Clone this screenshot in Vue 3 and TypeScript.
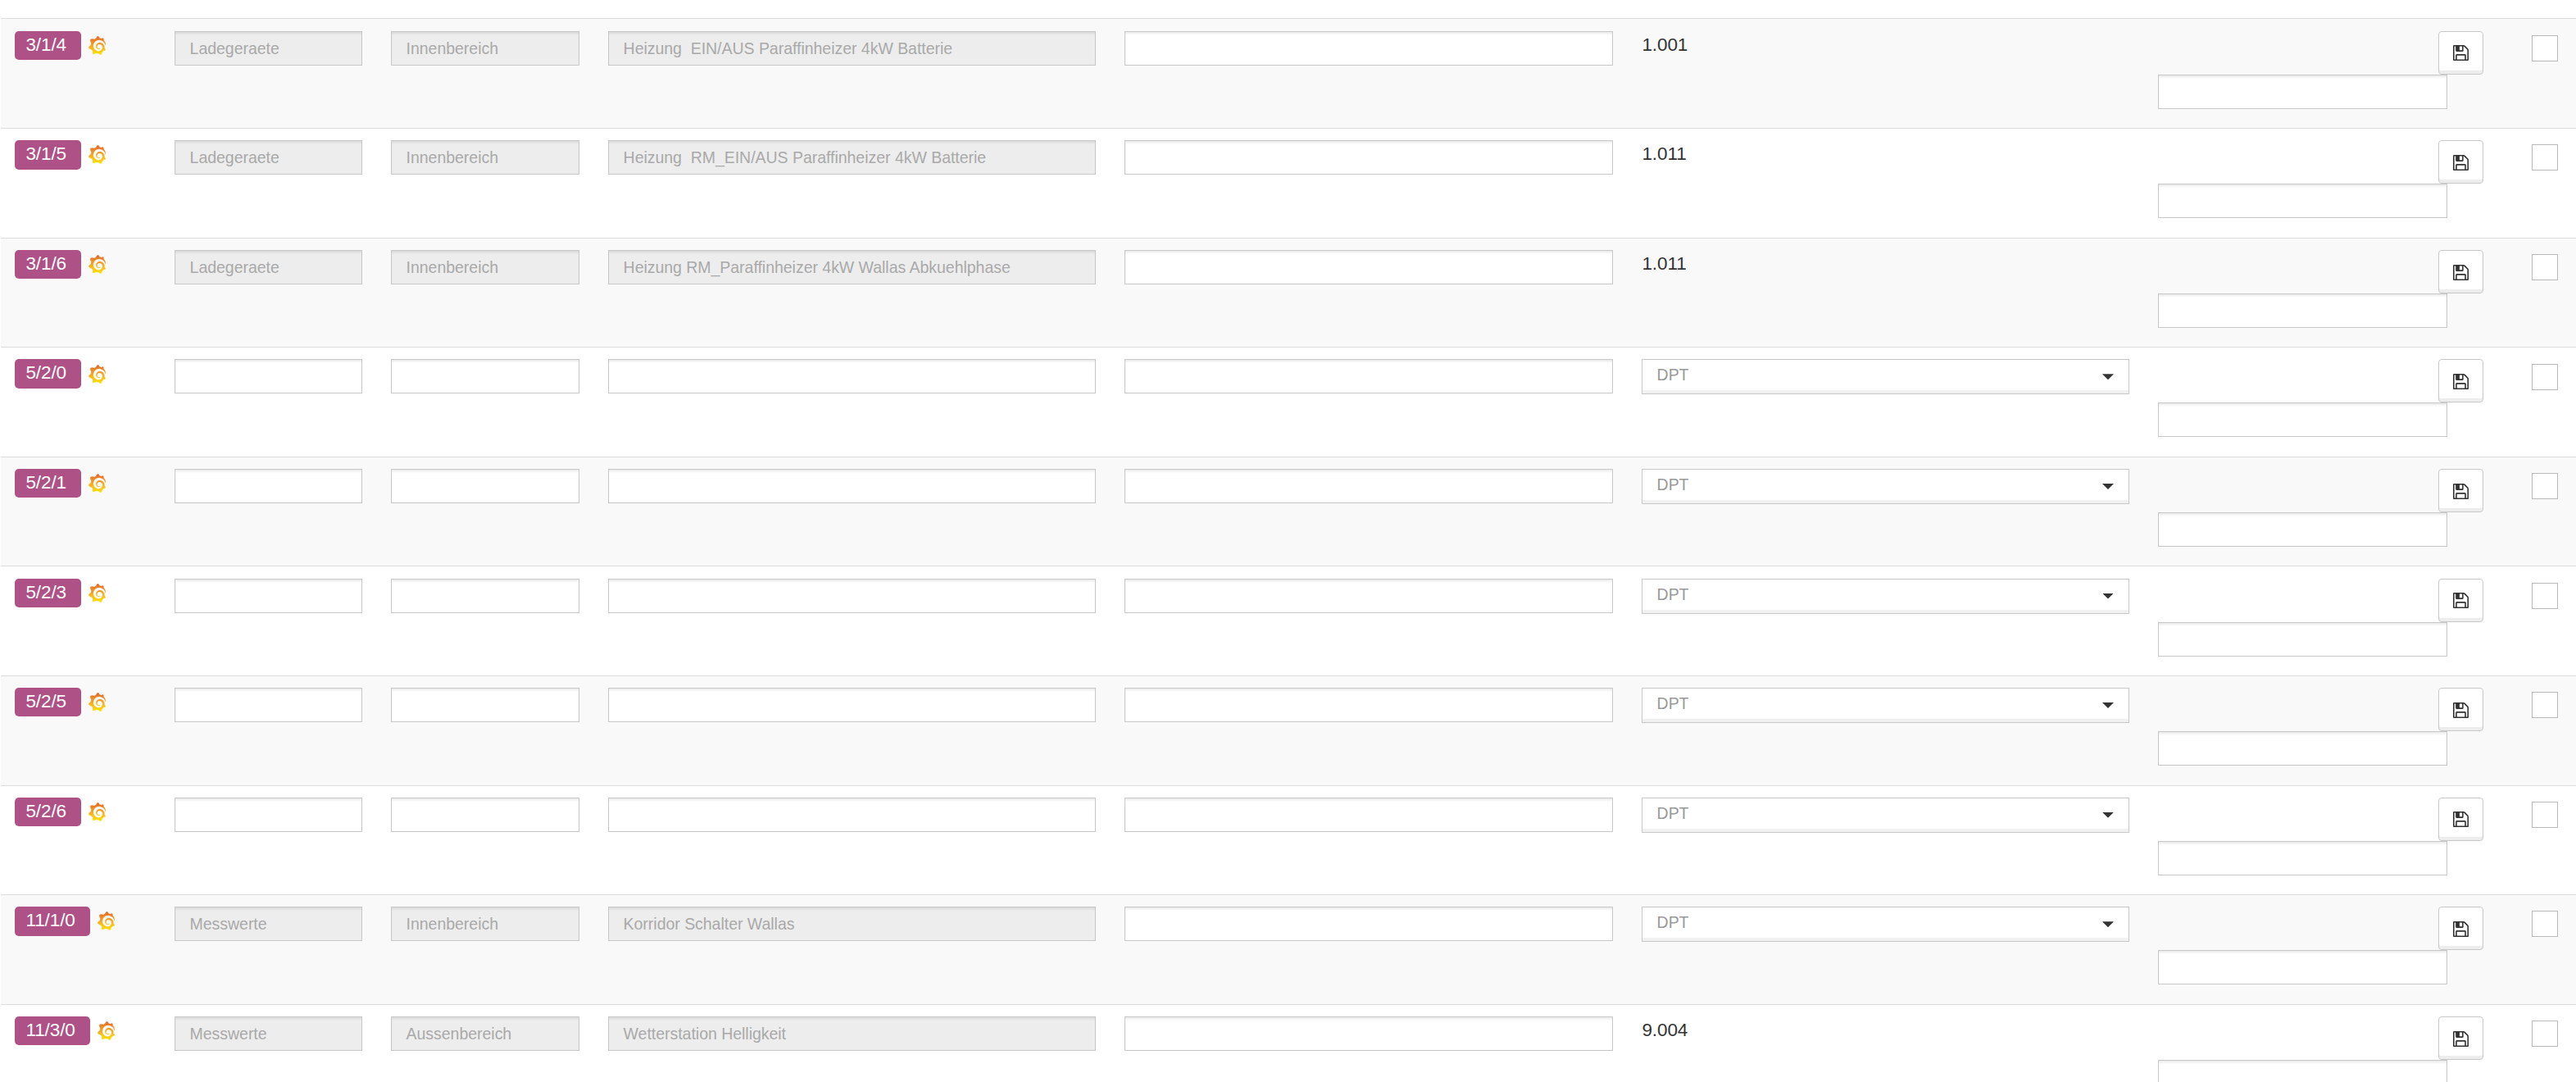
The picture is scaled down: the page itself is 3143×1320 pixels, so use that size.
<script setup lang="ts">
interface Row {
  address: string
  main: string
  middle: string
  name: string
  dpt: string
}

const heating = (address: string, name: string, dpt: string): Row => ({
  address,
  main: 'Ladegeraete',
  middle: 'Innenbereich',
  name,
  dpt,
})
const blank = (address: string): Row => ({ address, main: '', middle: '', name: '', dpt: '' })

const rows: Row[] = [
  heating('3/1/4', 'Heizung  EIN/AUS Paraffinheizer 4kW Batterie', '1.001'),
  heating('3/1/5', 'Heizung  RM_EIN/AUS Paraffinheizer 4kW Batterie', '1.011'),
  heating('3/1/6', 'Heizung RM_Paraffinheizer 4kW Wallas Abkuehlphase', '1.011'),
  blank('5/2/0'),
  blank('5/2/1'),
  blank('5/2/3'),
  blank('5/2/5'),
  blank('5/2/6'),
  { address: '11/1/0', main: 'Messwerte', middle: 'Innenbereich', name: 'Korridor Schalter Wallas', dpt: '' },
  { address: '11/3/0', main: 'Messwerte', middle: 'Aussenbereich', name: 'Wetterstation Helligkeit', dpt: '9.004' },
]
</script>

<template>
  <main class="page">
    <svg class="defs" width="0" height="0" aria-hidden="true">
      <defs>
        <linearGradient id="sun" x1="0" y1="1" x2="0" y2="0">
          <stop offset="0" stop-color="#fbe400" />
          <stop offset="0.4" stop-color="#f8b41e" />
          <stop offset="1" stop-color="#e5642c" />
        </linearGradient>
        <symbol id="grafana" viewBox="0.95 0 22.1 24">
          <path fill="url(#sun)" stroke="url(#sun)" stroke-width="0.25" d="M23.02 10.59a8.578 8.578 0 0 0-.862-3.034 8.911 8.911 0 0 0-1.789-2.445c.337-1.342-.413-2.505-.413-2.505-1.292-.08-2.113.4-2.416.62-.052-.02-.102-.044-.154-.064-.22-.089-.446-.172-.677-.247-.231-.073-.47-.14-.711-.197a9.867 9.867 0 0 0-.875-.161C14.557.753 12.94 0 12.94 0c-1.804 1.145-2.147 2.744-2.147 2.744l-.018.093c-.098.029-.2.057-.298.088-.138.042-.275.094-.413.143-.138.055-.275.107-.41.166a8.869 8.869 0 0 0-1.557.87l-.063-.029c-2.497-.955-4.716.195-4.716.195-.203 2.658.996 4.33 1.235 4.636a11.608 11.608 0 0 0-.607 2.635C1.636 12.677.953 15.014.953 15.014c1.926 2.214 4.171 2.351 4.171 2.351.003-.002.006-.002.006-.005.285.509.615.994.986 1.446.156.19.32.371.488.548-.704 2.009.099 3.68.099 3.68 2.144.08 3.553-.937 3.849-1.173a9.784 9.784 0 0 0 3.164.501h.08l.055-.003.107-.002.103-.005.003.002c1.01 1.44 2.788 1.646 2.788 1.646 1.264-1.332 1.337-2.653 1.337-2.94v-.058c0-.02-.003-.039-.003-.06.265-.187.52-.387.758-.6a7.875 7.875 0 0 0 1.415-1.7c1.43.083 2.437-.885 2.437-.885-.236-1.49-1.085-2.216-1.264-2.354l-.018-.013-.016-.013a.217.217 0 0 1-.031-.02c.008-.092.016-.18.02-.27.011-.162.016-.323.016-.48v-.253l-.005-.098-.008-.135a1.891 1.891 0 0 0-.01-.13c-.003-.042-.008-.083-.013-.125l-.016-.124-.018-.122a6.215 6.215 0 0 0-2.032-3.73 6.015 6.015 0 0 0-3.222-1.46 6.292 6.292 0 0 0-.85-.048l-.107.002h-.063l-.044.003-.104.008a4.777 4.777 0 0 0-3.335 1.695c-.332.4-.592.84-.768 1.297a4.594 4.594 0 0 0-.312 1.817l.003.091c.005.055.007.11.013.164a3.615 3.615 0 0 0 .698 1.82 3.53 3.53 0 0 0 1.827 1.282c.33.098.66.14.971.137.039 0 .078 0 .114-.002l.063-.003c.02 0 .041-.003.062-.003.034-.002.065-.007.099-.01.007 0 .018-.003.028-.003l.031-.005.06-.008a1.18 1.18 0 0 0 .112-.02c.036-.008.072-.013.109-.024a2.634 2.634 0 0 0 .914-.415c.028-.02.056-.041.085-.065a.248.248 0 0 0 .039-.35.244.244 0 0 0-.309-.06l-.078.042c-.09.044-.184.083-.283.116a2.476 2.476 0 0 1-.475.096c-.028.003-.054.006-.083.006l-.083.002c-.026 0-.054 0-.08-.002l-.102-.006h-.012l-.024.006c-.016-.003-.031-.003-.044-.006-.031-.002-.06-.007-.091-.01a2.59 2.59 0 0 1-.724-.213 2.557 2.557 0 0 1-.667-.438 2.52 2.52 0 0 1-.805-1.475 2.306 2.306 0 0 1-.029-.444l.006-.122v-.023l.002-.031c.003-.021.003-.04.005-.06a3.163 3.163 0 0 1 1.352-2.29 3.12 3.12 0 0 1 .937-.43 2.946 2.946 0 0 1 .776-.101h.06l.07.002.045.003h.026l.07.005a4.041 4.041 0 0 1 1.635.49 3.94 3.94 0 0 1 1.602 1.662 3.77 3.77 0 0 1 .397 1.414l.005.076.003.075c.002.026.002.05.002.075 0 .024.003.052 0 .07v.065l-.002.073-.008.174a6.195 6.195 0 0 1-.08.639 5.1 5.1 0 0 1-.267.927 5.31 5.31 0 0 1-.624 1.13 5.052 5.052 0 0 1-3.237 2.014 4.82 4.82 0 0 1-.649.066l-.039.003h-.287a6.607 6.607 0 0 1-1.716-.265 6.776 6.776 0 0 1-3.4-2.274 6.75 6.75 0 0 1-.746-1.15 6.616 6.616 0 0 1-.714-2.596l-.005-.083-.002-.02v-.056l-.003-.073v-.096l-.003-.104v-.07l.003-.163c.008-.22.026-.45.054-.678a8.707 8.707 0 0 1 .28-1.355c.128-.444.286-.872.473-1.277a7.04 7.04 0 0 1 1.456-2.1 5.925 5.925 0 0 1 .953-.763c.169-.111.343-.213.524-.306.089-.05.182-.091.273-.135.047-.02.093-.042.138-.062a7.177 7.177 0 0 1 .714-.267l.145-.045c.049-.015.098-.026.148-.041.098-.029.197-.052.296-.076.049-.013.1-.02.15-.033l.15-.032.151-.028.076-.013.075-.01.153-.024c.057-.01.114-.013.171-.023l.169-.021c.036-.003.073-.008.106-.01l.073-.008.036-.003.042-.002c.057-.003.114-.008.171-.01l.086-.006h.023l.037-.003.145-.007a7.999 7.999 0 0 1 1.708.125 7.917 7.917 0 0 1 2.048.68 8.253 8.253 0 0 1 1.672 1.09l.09.077.089.078c.06.052.114.107.171.159.057.052.112.106.166.16.052.055.107.107.159.164a8.671 8.671 0 0 1 1.41 1.978c.012.026.028.052.04.078l.04.078.075.156c.023.051.05.1.07.153l.065.15a8.848 8.848 0 0 1 .45 1.34.19.19 0 0 0 .201.142.186.186 0 0 0 .172-.184c.01-.246.002-.532-.024-.856z" />
        </symbol>
        <symbol id="floppy" viewBox="0 0 1536 1536">
          <path fill="#333" d="M384 1408h768v-384h-768v384zm896 0h128v-896q0-14-10-38.500t-20-34.500l-281-281q-10-10-34-20t-39-10v416q0 40-28 68t-68 28h-576q-40 0-68-28t-28-68v-416h-128v1280h128v-416q0-40 28-68t68-28h832q40 0 68 28t28 68v416zm-384-928v-320q0-13-9.500-22.500t-22.500-9.500h-192q-13 0-22.500 9.500t-9.500 22.500v320q0 13 9.500 22.500t22.500 9.500h192q13 0 22.500-9.500t9.500-22.500zm640 32v928q0 40-28 68t-68 28h-1344q-40 0-68-28t-28-68v-1344q0-40 28-68t68-28h928q40 0 88 20t76 48l280 280q28 28 48 76t20 88z" />
        </symbol>
      </defs>
    </svg>

    <div class="table">
      <div v-for="(row, i) in rows" :key="row.address" class="row" :class="{ odd: i % 2 === 0 }">
        <div class="address">
          <span class="label">{{ row.address }}</span>
          <svg class="sun"><use href="#grafana" /></svg>
        </div>
        <div class="field" :class="{ disabled: row.main }">{{ row.main }}</div>
        <div class="field" :class="{ disabled: row.middle }">{{ row.middle }}</div>
        <div class="field" :class="{ disabled: row.name }">{{ row.name }}</div>
        <div class="field"></div>
        <div v-if="row.dpt" class="dpt">{{ row.dpt }}</div>
        <div v-else class="select">
          <span>DPT</span>
          <i class="caret"></i>
        </div>
        <div class="action">
          <button class="save" type="button" aria-label="Speichern">
            <svg class="disk"><use href="#floppy" /></svg>
          </button>
          <div class="field note"></div>
        </div>
        <div class="check"></div>
      </div>
    </div>
  </main>
</template>

<style>
body {
  margin: 0;
  background: #fff;
}
</style>

<style scoped>
.page {
  box-sizing: border-box;
  width: 3143px;
  height: 1320px;
  padding: 22.35px 0 0 1px;
  overflow: hidden;
  background: #fff;
  color: #333;
  font-family: "Liberation Sans", Arial, sans-serif;
}
.page * {
  box-sizing: border-box;
}
.defs {
  position: absolute;
}
.row {
  display: grid;
  grid-template-columns: 160px 229px 230px 595px 596px 595px 397px 32px;
  column-gap: 35px;
  justify-content: start;
  align-items: start;
  height: 133.6px;
  padding: 14.2px 0 0 17px;
  border-top: 1px solid #dcdcdc;
}
.row.odd {
  background: #f9f9f9;
}
.action {
  display: flex;
  flex-direction: column;
}
.address {
  display: flex;
  align-items: flex-start;
}
.label {
  height: 35.4px;
  padding: 0 18.2px 0 13.4px;
  border-radius: 5px;
  background: #ad5186;
  color: #fff;
  font-size: 22.5px;
  letter-spacing: -0.08px;
  line-height: 33px;
}
.sun {
  width: 21px;
  height: 23px;
  margin: 6.2px 0 0 9.2px;
  overflow: visible;
}
.field {
  height: 42px;
  padding: 0 17.6px;
  border: 1px solid #c8c8c8;
  background: #fff;
  box-shadow: inset 0 3px 3px -1px rgba(0, 0, 0, 0.09);
  font-size: 19.44px;
  line-height: 41px;
  white-space: pre;
}
.field.disabled {
  background: #ededed;
  color: #a9a9a9;
}
.dpt {
  padding-left: 0.4px;
  font-size: 22.5px;
  letter-spacing: -0.08px;
  line-height: 33px;
}
.select {
  display: flex;
  justify-content: space-between;
  height: 43px;
  padding: 0 18px 0 17.6px;
  border: 1px solid #c8c8c8;
  background: #fff;
  box-shadow: inset 0 -4px 0 #f1f1f1;
  color: #999;
  font-size: 19.44px;
  line-height: 37px;
}
.caret {
  width: 14px;
  height: 7px;
  margin-top: 17px;
  background: #333;
  clip-path: polygon(0 0, 100% 0, 50% 100%);
}
.save {
  position: relative;
  align-self: flex-end;
  display: flex;
  justify-content: center;
  align-items: flex-start;
  width: 55px;
  height: 53px;
  padding: 16.8px 0 0;
  border: 1px solid #c8c8c8;
  border-radius: 4px;
  background: #fff;
  box-shadow: inset 0 -4px 0 #ededed;
}
.disk {
  width: 19px;
  height: 19px;
}
.note {
  width: 353px;
}
.check {
  width: 32px;
  height: 32px;
  margin: 5.2px 0 0 24px;
  border: 1px solid #b9b9b9;
  background: #fff;
}
</style>
